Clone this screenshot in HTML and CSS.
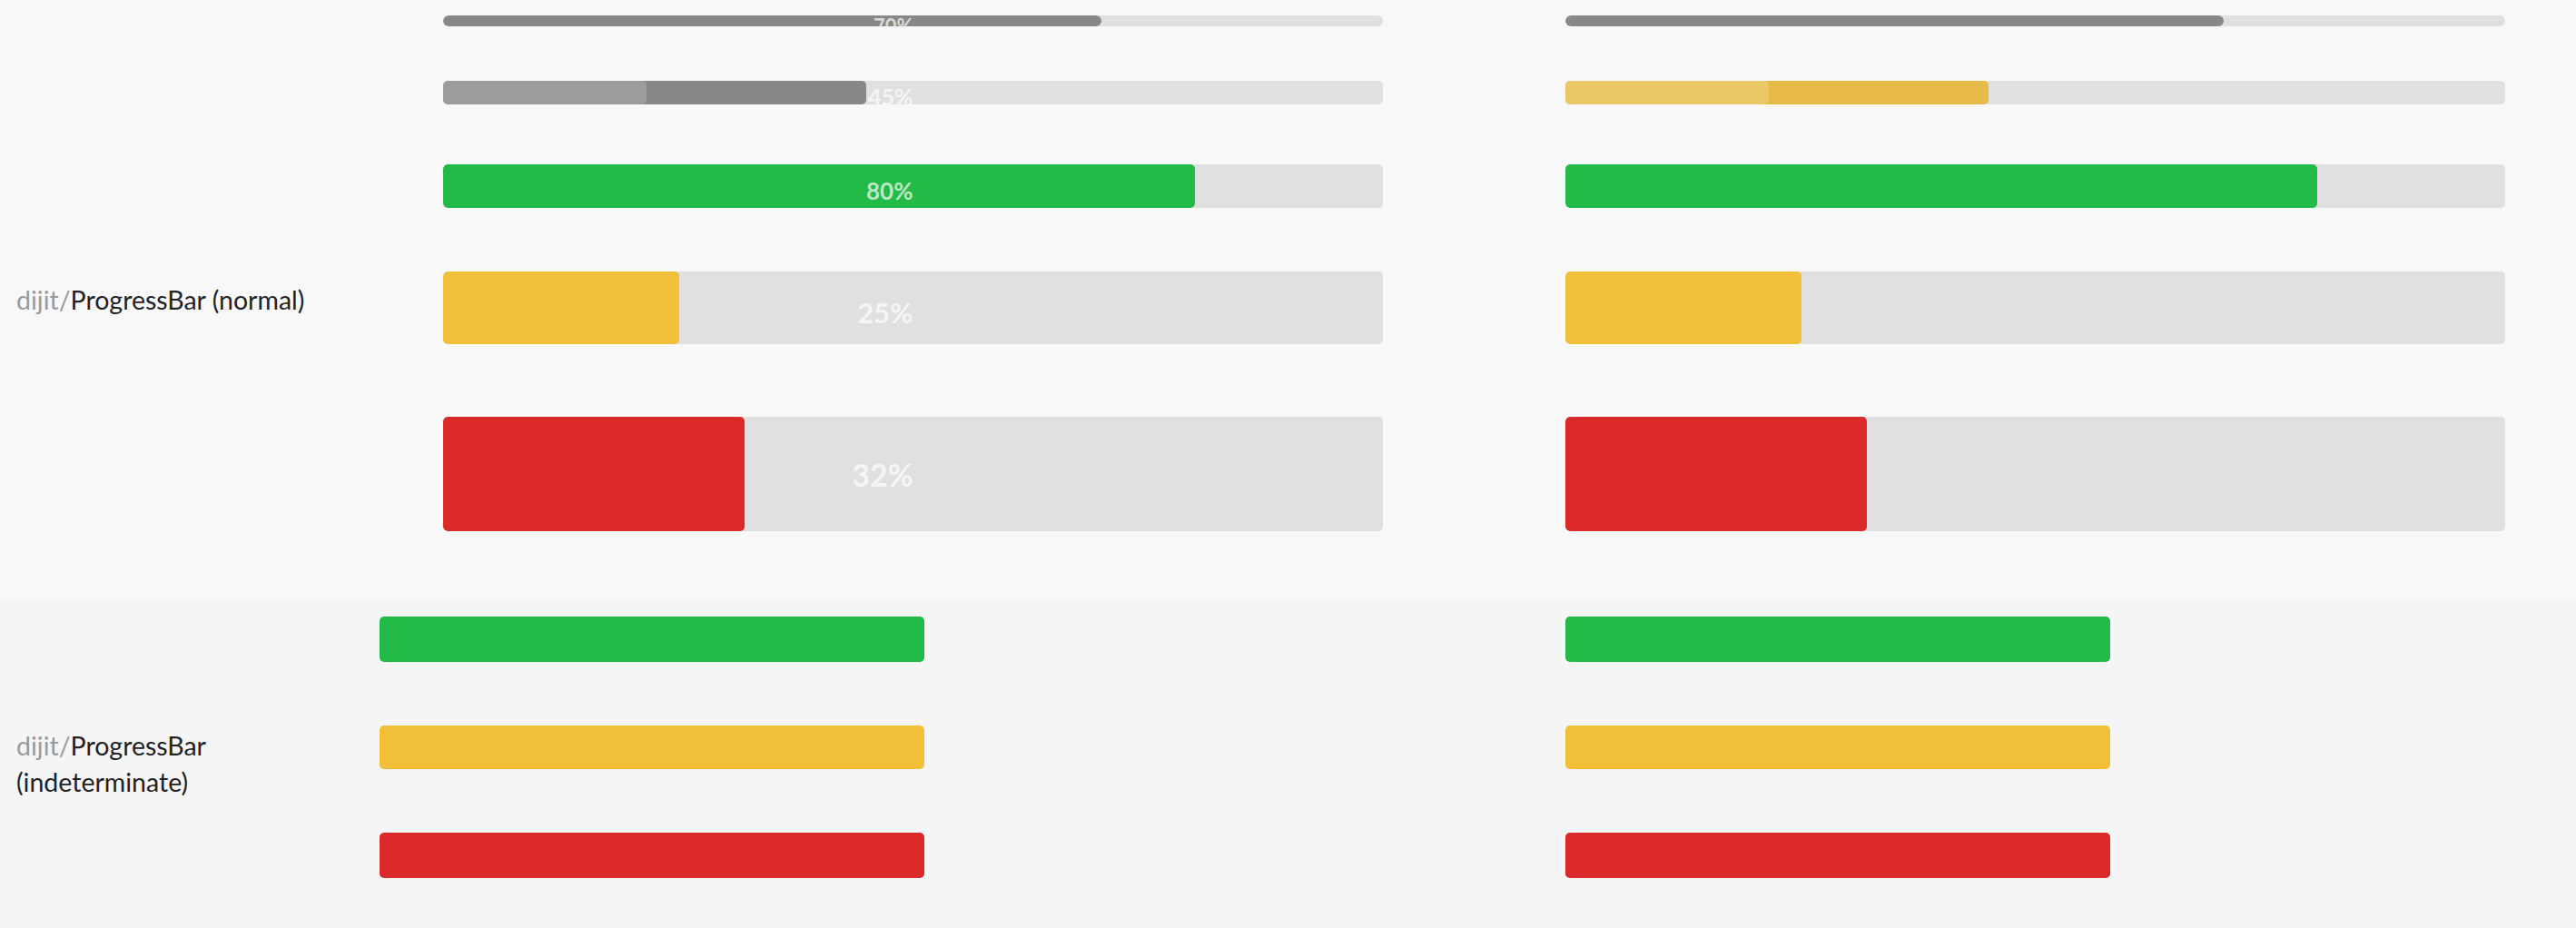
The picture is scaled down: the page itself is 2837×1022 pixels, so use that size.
FILE: index.html
```html
<!DOCTYPE html>
<html>
<head>
<meta charset="utf-8">
<link rel="stylesheet" href="styles.css">
</head>
<body>
<div class="section normal">
  <div class="label-cell"><div class="label"><span class="pkg">dijit/</span>ProgressBar (normal)</div></div>
  <div class="col col-first">
    <div class="track s1"><div class="fill gray" style="width:70%"></div><span class="pct">70%</span></div>
    <div class="track s2"><div class="fill gray" style="width:45%"><div class="buffer" style="width:48%"></div></div><span class="pct">45%</span></div>
    <div class="track s3"><div class="fill green" style="width:80%"></div><span class="pct">80%</span></div>
    <div class="track s4"><div class="fill yellow" style="width:25.1%"></div><span class="pct">25%</span></div>
    <div class="track s5"><div class="fill red" style="width:32.1%"></div><span class="pct">32%</span></div>
  </div>
  <div class="col">
    <div class="track s1"><div class="fill gray" style="width:70%"></div></div>
    <div class="track s2"><div class="fill amber" style="width:45%"><div class="buffer amber-light" style="width:48%"></div></div></div>
    <div class="track s3"><div class="fill green" style="width:80%"></div></div>
    <div class="track s4"><div class="fill yellow" style="width:25.1%"></div></div>
    <div class="track s5"><div class="fill red" style="width:32.1%"></div></div>
  </div>
</div>
<div class="section indeterminate">
  <div class="label-cell"><div class="label"><span class="pkg">dijit/</span>ProgressBar (indeterminate)</div></div>
  <div class="col">
    <div class="ibar green i1"></div>
    <div class="ibar yellow i2"></div>
    <div class="ibar red i3"></div>
  </div>
  <div class="col">
    <div class="ibar green i1"></div>
    <div class="ibar yellow i2"></div>
    <div class="ibar red i3"></div>
  </div>
</div>
</body>
</html>
```

FILE: styles.css
```css
html, body {
  margin: 0;
  padding: 0;
  background: #f5f5f5;
  font-family: Lato, "Open Sans", sans-serif;
}

.section {
  display: grid;
  grid-template-columns: 418px 1306px 1fr;
}

.normal {
  height: 659px;
  background: #f8f8f8;
}

.indeterminate {
  height: 363px;
  background: #f5f5f5;
}

.label-cell {
  display: flex;
  align-items: center;
  padding-left: 18px;
}

.label {
  width: 380px;
  font-size: 28.5px;
  line-height: 40px;
  color: #222;
}

.pkg {
  color: #9a9a9a;
}

.col {
  display: flex;
  flex-direction: column;
  align-items: flex-start;
}

.normal .col {
  padding-top: 17px;
}

.col-first .track {
  margin-left: 70px;
}

.track {
  position: relative;
  width: 1035px;
  background: #e0e0e0;
  border-radius: 5px;
  overflow: hidden;
}

.fill {
  position: relative;
  height: 100%;
  border-radius: 5px;
}

.buffer {
  position: absolute;
  left: 0;
  top: 0;
  height: 100%;
  background: #9c9c9c;
  border-radius: 5px;
}

.gray { background: #888888; }
.amber { background: #e8bb48; }
.amber-light { background: #eac767; }
.green { background: #22bb47; }
.yellow { background: #f1c038; }
.red { background: #db2929; }

.s1 { height: 12px; border-radius: 6px; }
.s1 .fill { border-radius: 6px; }
.s2 { height: 26px; margin-top: 60px; }
.s3 { height: 48px; margin-top: 66px; }
.s4 { height: 80px; margin-top: 70px; }
.s5 { height: 126px; margin-top: 80px; }

.pct {
  position: absolute;
  right: 50%;
  line-height: 1;
  font-weight: 700;
  color: rgba(255, 255, 255, 0.7);
}

.s1 .pct { font-size: 22px; top: 1px; }
.s2 .pct { font-size: 25px; top: 5px; }
.s3 .pct { font-size: 26px; top: 16px; }
.s4 .pct { font-size: 31px; top: 30px; }
.s5 .pct { font-size: 34px; top: 47px; }

.indeterminate .col {
  padding-top: 20px;
}

.ibar {
  width: 600px;
  border-radius: 5px;
}

.i1 { height: 50px; }
.i2 { height: 48px; margin-top: 70px; }
.i3 { height: 50px; margin-top: 70px; }
```
